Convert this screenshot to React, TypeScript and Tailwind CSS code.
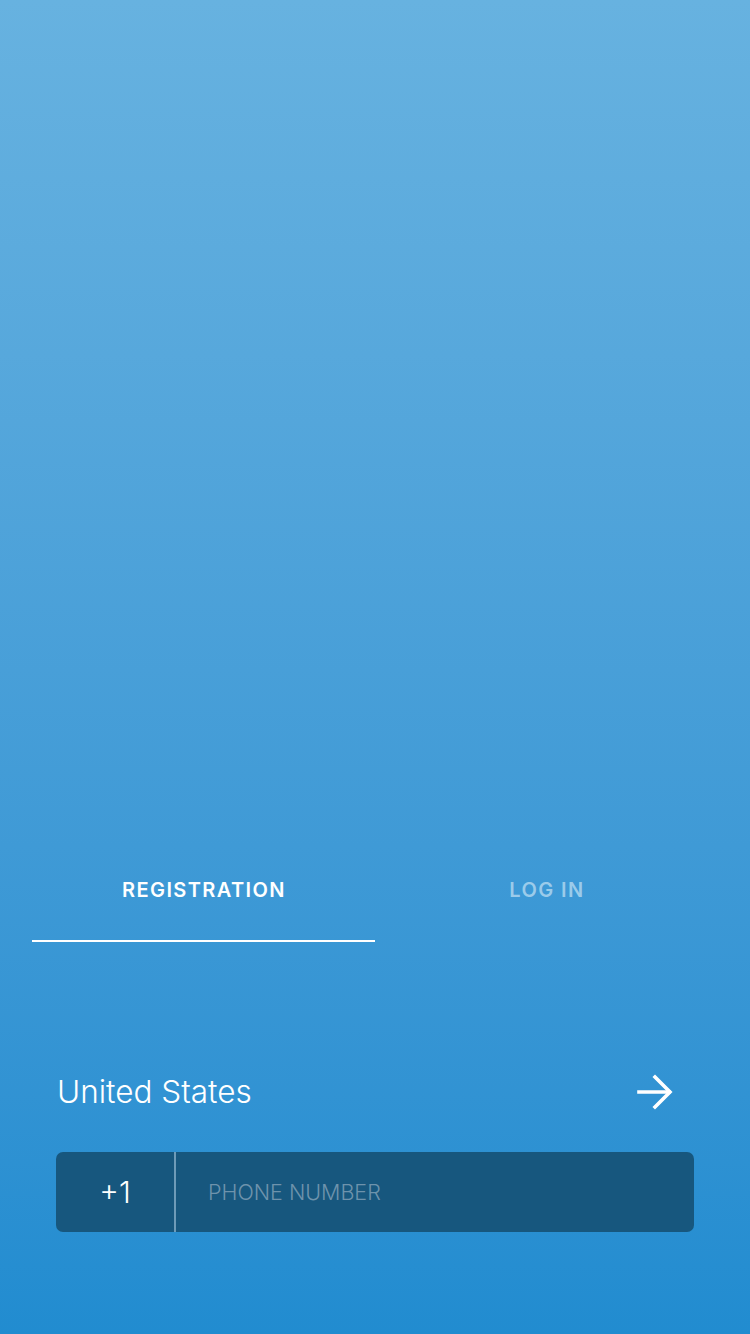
import React from "react";

export default function App() {
  return (
    <div
      className="w-[750px] h-[1334px] flex flex-col bg-gradient-to-b from-[#67b2e0] to-[#218cd0]"
      style={{ fontFamily: "Inter, 'Noto Sans', sans-serif" }}
    >
      <div className="h-[858px]" />
      <div className="mx-[32px] flex">
        <div className="flex-1 flex flex-col items-center">
          <div className="h-[64px] flex items-center text-white text-[20px] font-semibold tracking-[1.4px] pl-[1px]">
            REGISTRATION
          </div>
          <div className="w-full h-[2px] bg-white mt-[18px]" />
        </div>
        <div className="flex-1 flex flex-col items-center">
          <div className="h-[64px] flex items-center text-[#9bcbea] text-[20px] font-semibold tracking-[1.4px] pl-[1px]">
            LOG IN
          </div>
        </div>
      </div>
      <div className="mt-[118px] mx-[56px] flex items-center justify-between h-[64px]">
        <span className="text-white text-[31.5px] font-light pl-[1px]">United States</span>
        <svg width="38" height="38" viewBox="0 0 38 38" className="mr-[20px]" fill="none" stroke="white" strokeWidth="3.6" strokeLinecap="square">
          <path d="M3 19 H33" />
          <path d="M19 4 L34 19 L19 34" />
        </svg>
      </div>
      <div className="mt-[28px] mx-[56px] h-[80px] rounded-[7px] bg-[#17577e] flex">
        <div className="w-[120px] flex items-center justify-center text-white text-[30px] font-light border-r-2 border-[#6e9bb8]">
          +1
        </div>
        <div className="flex-1 flex items-center pl-[32px] text-[#6e93ac] text-[21.5px] font-light">
          PHONE NUMBER
        </div>
      </div>
    </div>
  );
}
